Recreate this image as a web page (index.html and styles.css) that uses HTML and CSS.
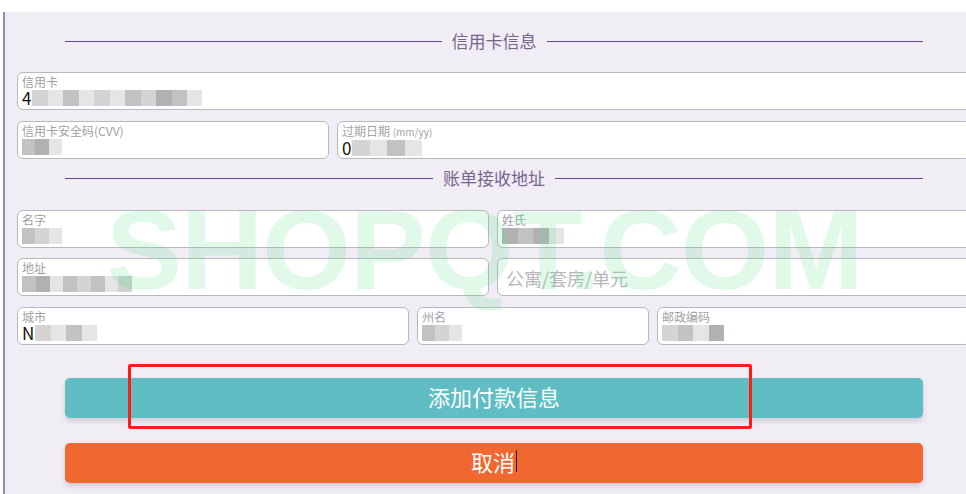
FILE: index.html
```html
<!DOCTYPE html>
<html lang="zh-CN">
<head>
<meta charset="utf-8">
<title>添加付款信息</title>
<link rel="stylesheet" href="styles.css">
</head>
<body>
<div class="topstrip"></div>
<div class="panel">
  <form class="form">
    <div class="legend legend-card"><span class="rule"></span><span class="legend-text">信用卡信息</span><span class="rule"></span></div>

    <div class="row row-card">
      <div class="field">
        <div class="label">信用卡</div>
        <div class="value"><span class="digit">4</span><span class="mosaic w170"><i class="c2"></i><i class="c1"></i><i class="c3"></i><i class="c1"></i><i class="c2"></i><i class="c1"></i><i class="c3"></i><i class="c2"></i><i class="c4"></i><i class="c3"></i><i class="c1"></i></span></div>
      </div>
    </div>

    <div class="row row-cvv">
      <div class="field">
        <div class="label">信用卡安全码(CVV)</div>
        <div class="value"><span class="mosaic w40"><i class="c3"></i><i class="c4"></i><i class="c1"></i></span></div>
      </div>
      <div class="field">
        <div class="label">过期日期 <small>(mm/yy)</small></div>
        <div class="value"><span class="digit">0</span><span class="mosaic w70"><i class="c2"></i><i class="c1"></i><i class="c3"></i><i class="c1"></i></span></div>
      </div>
    </div>

    <div class="legend legend-bill"><span class="rule"></span><span class="legend-text">账单接收地址</span><span class="rule"></span></div>

    <div class="row row-half row-name">
      <div class="field">
        <div class="label">名字</div>
        <div class="value"><span class="mosaic w40"><i class="c3"></i><i class="c2"></i><i class="c1"></i></span></div>
      </div>
      <div class="field">
        <div class="label">姓氏</div>
        <div class="value"><span class="mosaic w60"><i class="c4"></i><i class="c3"></i><i class="c4"></i><i class="c1"></i></span></div>
      </div>
    </div>

    <div class="row row-half row-addr">
      <div class="field">
        <div class="label">地址</div>
        <div class="value"><span class="mosaic w110"><i class="c3"></i><i class="c4"></i><i class="c1"></i><i class="c3"></i><i class="c2"></i><i class="c3"></i><i class="c1"></i><i class="c5"></i></span></div>
      </div>
      <div class="field field-ph">
        <div class="placeholder">公寓/套房/单元</div>
      </div>
    </div>

    <div class="row row-city">
      <div class="field">
        <div class="label">城市</div>
        <div class="value"><span class="digit">N</span><span class="mosaic w60"><i class="c2"></i><i class="c1"></i><i class="c3"></i><i class="c1"></i></span></div>
      </div>
      <div class="field">
        <div class="label">州名</div>
        <div class="value"><span class="mosaic w40"><i class="c3"></i><i class="c2"></i><i class="c1"></i></span></div>
      </div>
      <div class="field">
        <div class="label">邮政编码</div>
        <div class="value"><span class="mosaic w60"><i class="c2"></i><i class="c3"></i><i class="c1"></i><i class="c4"></i></span></div>
      </div>
    </div>

    <div class="actions">
      <button type="button" class="btn btn-add">添加付款信息</button>
      <button type="button" class="btn btn-cancel">取消<span class="caret"></span></button>
    </div>
  </form>
  <div class="watermark">SHOPQT.COM</div>
  <div class="highlight"></div>
</div>
</body>
</html>
```
FILE: styles.css
```css
html, body {
  margin: 0;
  padding: 0;
  overflow: hidden;
  background: #ffffff;
  font-family: "Noto Sans CJK SC", "Noto Sans", "Liberation Sans", sans-serif;
}

.topstrip {
  height: 12px;
  background: #ffffff;
}

.panel {
  position: relative;
  margin-left: 3px;
  border-left: 2px solid #9b85bf;
  background: #f0edf5;
  padding-left: 12px;
  height: 482px;
  width: 1000px;
}

.form {
  width: 954px;
}

.legend {
  display: flex;
  align-items: center;
  height: 22px;
  margin: 0 48px;
  color: #76658f;
  font-size: 17px;
}

.legend .rule {
  flex: 1;
  height: 1px;
  background: #5e4690;
}

.legend-text {
  padding: 0 10px;
  line-height: 22px;
}

.legend-card {
  padding-top: 18px;
}

.legend-bill {
  margin-top: 8px;
}

.row {
  display: grid;
  column-gap: 8px;
}

.row-card {
  margin-top: 20px;
  grid-template-columns: 1fr;
}

.row-cvv {
  margin-top: 11px;
  grid-template-columns: 312px 1fr;
}

.row-name {
  margin-top: 21px;
}

.row-half {
  grid-template-columns: 472px 1fr;
}

.row-addr {
  margin-top: 10px;
}

.row-city {
  margin-top: 11px;
  grid-template-columns: 392px 232px 1fr;
}

.field {
  box-sizing: border-box;
  height: 38px;
  background: #ffffff;
  border: 1px solid #b9b6bd;
  border-radius: 6px;
  padding: 2px 4px 0;
  overflow: hidden;
}

.label {
  font-size: 12px;
  line-height: 14px;
  color: #a3a1a6;
  white-space: nowrap;
}

.label small {
  font-size: 10px;
}

.value {
  display: flex;
  align-items: center;
  height: 18px;
  font-size: 17px;
  color: #111111;
  line-height: 18px;
}

.digit {
  margin-right: 1px;
}

.mosaic {
  display: flex;
  height: 16px;
  filter: blur(0.6px);
}

.mosaic i {
  flex: 1;
  display: block;
}

.w40 { width: 40px; }
.w60 { width: 62px; }
.w70 { width: 70px; }
.w110 { width: 110px; }
.w170 { width: 170px; }

.c1 { background: #e6e4e6; }
.c2 { background: #d6d3d5; }
.c3 { background: #c4c1c3; }
.c4 { background: #b3b0b3; }
.c5 { background: #c9d4cc; }

.field-ph {
  display: flex;
  align-items: center;
  padding-left: 8px;
}

.placeholder {
  font-size: 18px;
  color: #b9b7bb;
}

.actions {
  margin: 33px 48px 0;
  display: flex;
  flex-direction: column;
  gap: 25px;
}

.btn {
  box-sizing: border-box;
  height: 40px;
  border: none;
  border-radius: 5px;
  color: #ffffff;
  font-family: "Noto Sans CJK SC", "Noto Sans", sans-serif;
  font-size: 22px;
  line-height: 26px;
  box-shadow: 0 3px 5px rgba(60, 40, 80, 0.18);
  padding: 0 0 5px;
  display: flex;
  align-items: center;
  justify-content: center;
}

.btn-add {
  background: #5fbdc3;
}

.btn-cancel {
  background: #f06830;
}

.caret {
  display: inline-block;
  width: 1px;
  height: 22px;
  background: #222222;
  margin-left: 1px;
}

.watermark {
  position: absolute;
  left: 101px;
  top: 172px;
  font-family: "Liberation Sans", Arial, sans-serif;
  font-weight: bold;
  font-size: 114px;
  letter-spacing: -1px;
  color: rgba(100, 225, 145, 0.2);
  pointer-events: none;
  white-space: nowrap;
}

.highlight {
  position: absolute;
  left: 123px;
  top: 352px;
  width: 618px;
  height: 59px;
  border: 3px solid #ff1c14;
  border-radius: 2px;
  pointer-events: none;
}
```
